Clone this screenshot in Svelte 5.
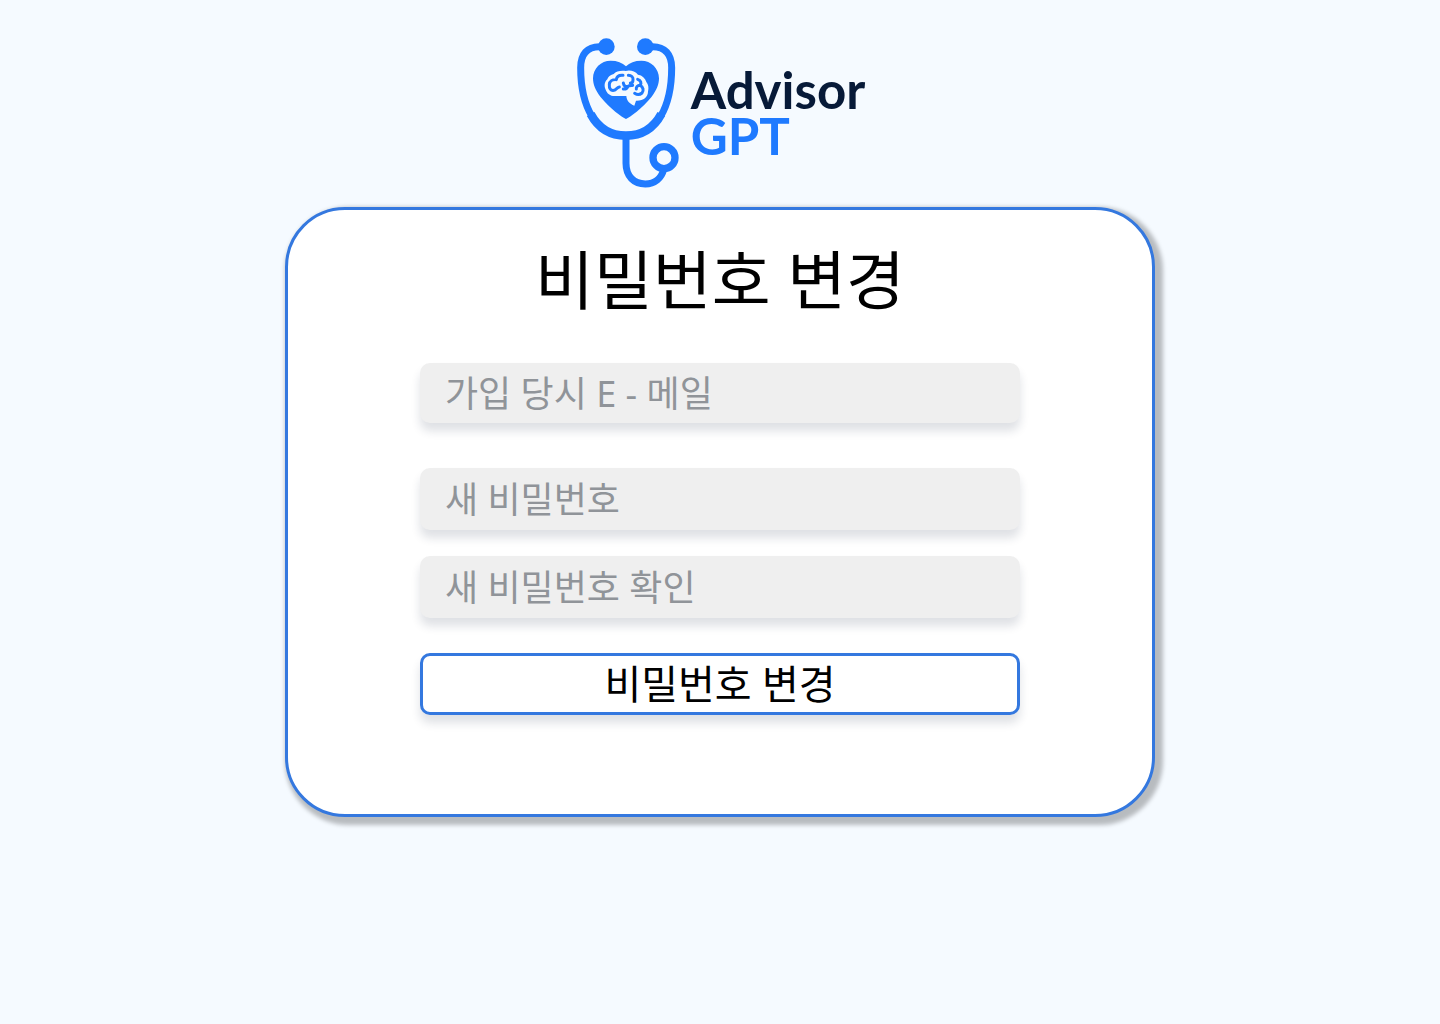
<script>
  let email = $state('');
  let password = $state('');
  let confirmation = $state('');
</script>

<main class="page">
  <div class="logo">
    <svg class="mark" viewBox="45 36 315 456" aria-hidden="true">
      <g fill="none" stroke="#1f7aff" stroke-width="21">
        <path d="M140 65H118C82 65 62 88 62 128C62 190 74 238 96 274" />
        <path d="M256 65H278C314 65 335 88 335 128C335 190 323 238 302 274" />
        <path d="M92 267C118 315 154 332 198 332C242 332 278 315 304 267" stroke-width="26" />
        <path d="M198 340V415C198 454 222 477 256 477C284 477 304 460 311 434" />
        <circle cx="312" cy="398" r="33" stroke-width="22" />
      </g>
      <g fill="#1f7aff">
        <circle cx="139" cy="65" r="25" />
        <circle cx="256" cy="65" r="25" />
        <path d="M198 282C186 276 150 251 121 215C106 195 99 179 99 160C99 130 123 107 152 107C172 107 187 113 198 124C209 113 224 107 244 107C273 107 297 130 297 160C297 179 290 195 275 215C246 251 210 276 198 282Z" />
      </g>
      <path
        d="M197 138C182 136 168 139 161 147C149 150 144 156 142 163C133 170 132 184 137 194C141 206 152 214 166 213H199C200 227 209 237 223 242L228 227C250 228 264 216 264 200C267 188 265 178 259 171C255 159 247 151 234 149C225 138 209 134 197 138Z"
        fill="#f5faff"
      />
      <g fill="none" stroke="#1f7aff" stroke-width="9" stroke-linecap="round" stroke-linejoin="round">
        <path d="M189 151C177 150 170 155 169 164C157 163 149 169 148 178C147 190 152 198 162 196C169 195 170 187 178 186" />
        <path d="M205 151C214 151 220 156 219 164C219 170 216 174 211 174" />
        <path d="M190 174C191 182 197 186 204 184C209 181 214 182 218 181M204 184C201 191 195 193 190 192" />
        <path d="M233 163C242 166 246 174 240 181C250 185 252 197 246 204C239 210 230 209 224 205" />
        <path d="M240 181C232 181 228 186 229 192" />
      </g>
    </svg>
    <div class="wordmark">
      <span>Advisor</span>
      <span class="accent">GPT</span>
    </div>
  </div>

  <section class="card">
    <h1>비밀번호 변경</h1>
    <form onsubmit={(event) => event.preventDefault()}>
      <input class="email" type="email" bind:value={email} placeholder="가입 당시 E - 메일" aria-label="가입 당시 E - 메일" />
      <input type="password" bind:value={password} placeholder="새 비밀번호" aria-label="새 비밀번호" />
      <input type="password" bind:value={confirmation} placeholder="새 비밀번호 확인" aria-label="새 비밀번호 확인" />
      <button type="submit">비밀번호 변경</button>
    </form>
  </section>
</main>

<style>
  :global(body) {
    margin: 0;
    background: #f5faff;
  }

  .page {
    box-sizing: border-box;
    min-height: 100vh;
    padding: 37px 24px 48px;
    display: flex;
    flex-direction: column;
    align-items: center;
    gap: 18px;
    font-family: "Noto Sans", "Noto Sans CJK KR", sans-serif;
  }

  .logo {
    display: flex;
    gap: 11px;
  }

  .mark {
    width: 105px;
    height: 152px;
  }

  .wordmark {
    display: flex;
    flex-direction: column;
    padding-top: 30px;
    font-family: Lato, sans-serif;
    font-size: 51px;
    font-weight: 700;
    line-height: 46px;
    color: #071a38;
  }

  .accent {
    color: #1f7aff;
  }

  .card {
    box-sizing: border-box;
    width: 100%;
    max-width: 870px;
    padding: 22px 24px 99px;
    border: 3px solid #3478df;
    border-radius: 60px;
    background: #fff;
    box-shadow: 4px 4px 4px 4px rgba(0, 0, 0, 0.25);
    display: flex;
    flex-direction: column;
    align-items: center;
    gap: 36px;
  }

  h1 {
    margin: 0;
    font-size: 64px;
    font-weight: 400;
    line-height: 95px;
    color: #000;
  }

  form {
    width: 100%;
    max-width: 600px;
    display: flex;
    flex-direction: column;
  }

  input,
  button {
    box-sizing: border-box;
    width: 100%;
    height: 62px;
    border-radius: 10px;
    font-family: inherit;
    box-shadow: 0 8px 10px rgba(30, 41, 70, 0.14);
  }

  input {
    margin-bottom: 26px;
    padding: 0 25px;
    border: 0;
    background: #efefef;
    font-size: 36px;
    color: #000;
  }

  input::placeholder {
    color: #909499;
    opacity: 1;
  }

  .email {
    height: 60px;
    margin-bottom: 45px;
  }

  button {
    margin-top: 9px;
    padding: 0;
    border: 3px solid #3478df;
    background: #fff;
    font-size: 40px;
    line-height: 56px;
    color: #000;
    cursor: pointer;
  }
</style>
